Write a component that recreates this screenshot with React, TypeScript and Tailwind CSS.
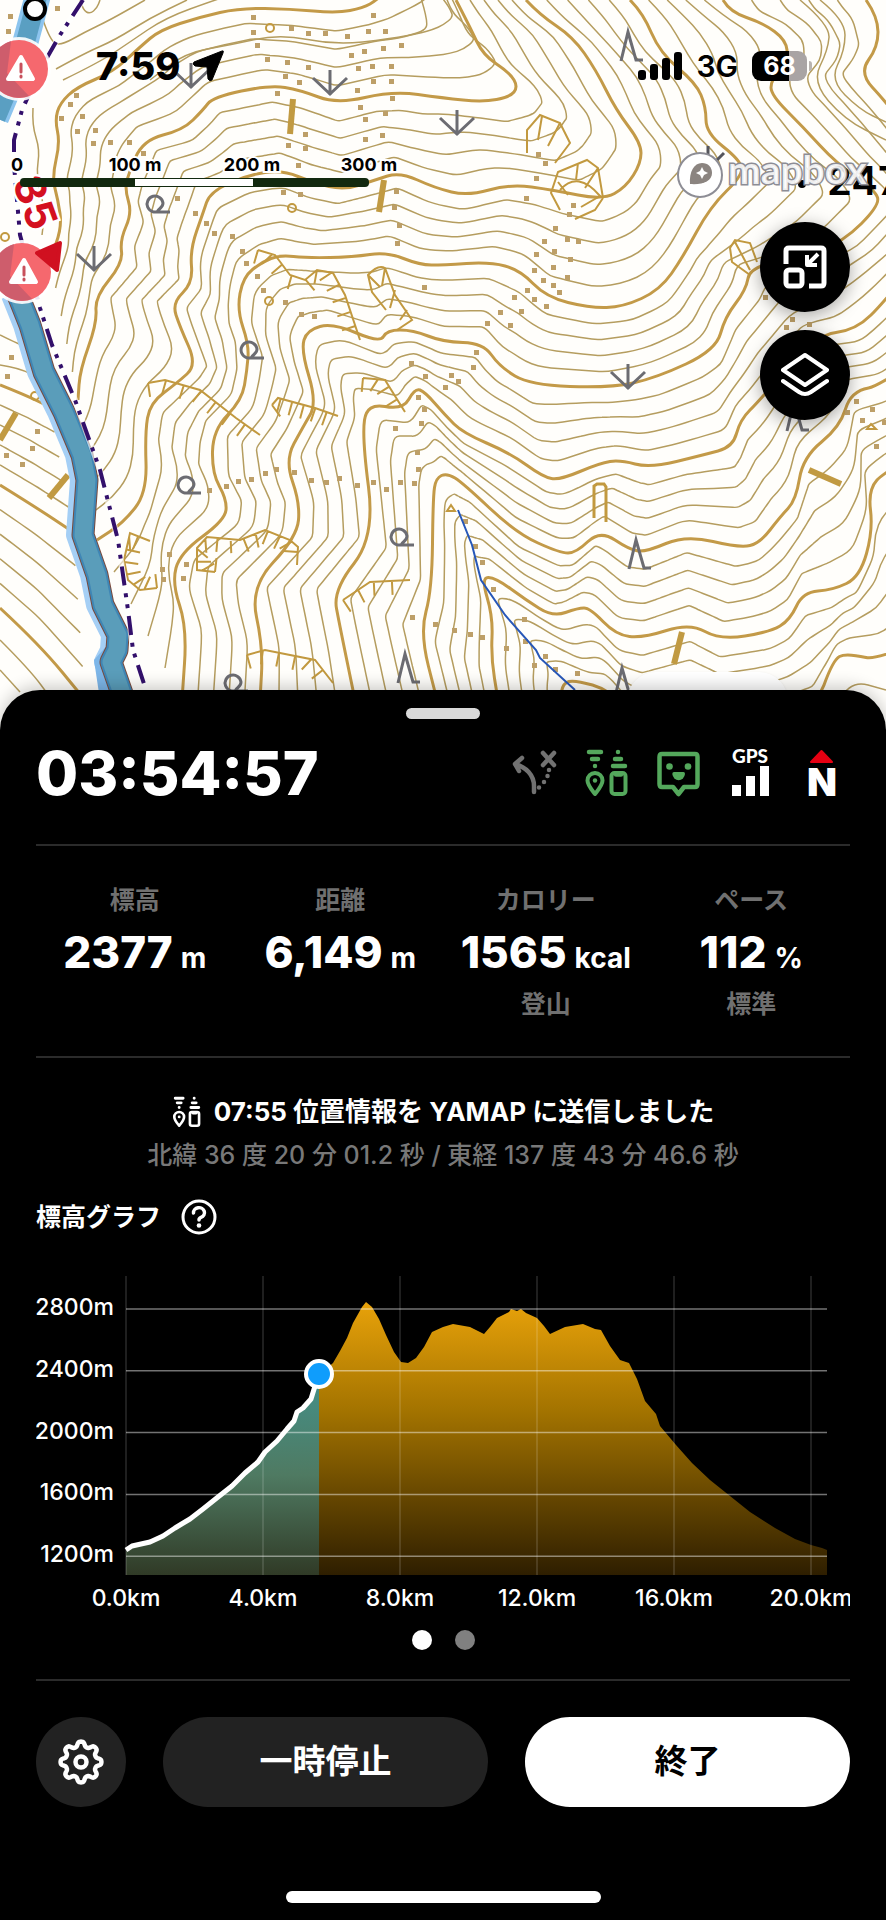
import { useState } from "react";

type Pt = [number, number];

const parse = (s: string): Pt[] =>
  s.trim().split(/\s+/).map((p) => p.split(",").map(Number) as Pt);

// Index contours, from the summit side down to the valley
const CONTOURS: Record<string, Pt[]> = {
  A: parse("400,-80 410,-30 377,0 363,8 337,13 290,9 240,8 200,17 160,30 140,47 113,72 77,87 60,103 55,120 60,143 52,177 58,200 62,227 50,260"),
  B: parse("456,0 470,27 483,55 510,73 518,87 510,97 483,102 443,98 393,91 337,104 300,90 270,85 213,97 203,110 183,130 143,140 128,175 125,190 132,213 120,240 123,263 95,297 97,323 80,370 78,400"),
  C: parse("526,0 540,15 573,37 596,70 616,110 641,143 641,163 626,187 603,200 553,190 510,184 468,196 435,188 400,172 375,180 345,190 313,183 283,170 247,175 210,192 203,213 190,250 193,283 172,303 180,327 197,365 177,383 150,403 145,433 147,493 123,523 97,540"),
  D: parse("630,0 643,13 660,53 696,83 706,107 706,133 740,160 743,175 710,207 683,257 660,290 623,307 590,308 546,297 520,270 490,262 443,265 420,265 387,252 353,257 307,258 280,255 262,262 243,277 237,310 249,345 247,370 242,400 213,430 212,473 227,500 225,520 180,553 172,583 187,627 182,700"),
  E: parse("723,0 730,12 763,23 786,40 788,60 771,80 771,95 803,127 836,163 875,190 880,205 843,242 800,258 750,267 746,290 725,317 716,350 656,378 610,388 530,385 500,367 483,343 443,342 413,330 387,330 380,343 333,323 307,330 301,350 317,403 303,427 285,460 300,503 297,537 250,587 263,647 260,700"),
  F: parse("866,0 878,17 878,47 859,73 886,102 940,170 950,220 886,300 856,330 816,335 760,400 740,420 733,447 703,455 650,468 620,460 600,463 560,480 543,477 510,453 463,433 445,415 425,392 415,388 403,410 367,403 362,437 375,537 333,590 340,627 355,700"),
  G: parse("1000,300 886,385 851,391 840,427 803,457 796,500 780,517 760,543 740,548 686,535 646,552 630,550 600,530 576,553 560,553 516,533 463,483 447,473 436,478 433,497 432,590 420,633 437,700"),
  H: parse("1000,400 886,470 868,490 873,530 860,577 833,590 803,592 790,620 770,632 720,640 690,623 643,638 616,635 590,608 578,608 553,617 526,600 496,578 481,577 493,617 491,657 498,700"),
  I: parse("1000,600 886,662 846,653 833,660 815,710 720,725 690,715 640,725 610,690 575,680 563,683 560,700"),
  L: parse("0,385 25,395 50,407"),
  M: parse("0,485 37,508 73,532"),
  N: parse("0,608 40,645 85,700"),
};

// Neighbouring contours and the vertices where they follow the same ridge or valley
const BANDS: { from: string; to: string; ties: Pt[] }[] = [
  { from: "A", to: "B", ties: [[0, 0], [1, 4], [4, 9], [6, 11], [10, 15], [15, 17], [18, 24]] },
  { from: "B", to: "C", ties: [[0, 0], [4, 6], [6, 8], [8, 12], [9, 15], [11, 17], [12, 18], [15, 19], [17, 21], [20, 22], [21, 23], [24, 31]] },
  { from: "C", to: "D", ties: [[0, 0], [6, 7], [8, 12], [10, 15], [13, 18], [15, 20], [18, 22], [22, 24], [25, 26], [26, 28], [28, 29], [31, 35]] },
  { from: "D", to: "E", ties: [[0, 0], [7, 10], [9, 13], [12, 18], [15, 21], [18, 24], [20, 26], [22, 27], [25, 29], [28, 31], [30, 32], [32, 34], [35, 36]] },
  { from: "E", to: "F", ties: [[0, 0], [5, 3], [10, 6], [14, 9], [16, 11], [18, 15], [19, 18], [21, 21], [23, 23], [27, 25], [31, 26], [33, 27], [34, 28], [36, 30]] },
  { from: "F", to: "G", ties: [[6, 0], [9, 2], [11, 6], [12, 8], [14, 10], [15, 12], [18, 14], [20, 16], [23, 17], [26, 19], [27, 20], [28, 21], [30, 22]] },
  { from: "G", to: "H", ties: [[0, 0], [2, 2], [4, 5], [5, 6], [8, 9], [9, 10], [10, 11], [12, 14], [14, 15], [16, 17], [17, 18], [20, 20], [22, 21]] },
  { from: "H", to: "I", ties: [[0, 0], [4, 2], [6, 4], [9, 5], [10, 6], [11, 7], [14, 8], [18, 10], [21, 11]] },
  { from: "L", to: "M", ties: [[0, 0], [2, 2]] },
  { from: "M", to: "N", ties: [[0, 0], [2, 2]] },
];

const resample = (pts: Pt[], n: number): Pt[] => {
  const len = [0];
  for (let i = 1; i < pts.length; i++) {
    len.push(len[i - 1] + Math.hypot(pts[i][0] - pts[i - 1][0], pts[i][1] - pts[i - 1][1]));
  }
  const total = len[len.length - 1];
  const out: Pt[] = [];
  for (let k = 0; k <= n; k++) {
    const d = (total * k) / n;
    let i = 1;
    while (i < pts.length - 1 && len[i] < d) i++;
    const t = (d - len[i - 1]) / (len[i] - len[i - 1]);
    out.push([
      pts[i - 1][0] + (pts[i][0] - pts[i - 1][0]) * t,
      pts[i - 1][1] + (pts[i][1] - pts[i - 1][1]) * t,
    ]);
  }
  return out;
};

const smooth = (pts: Pt[]) => {
  let d = `M${pts[0][0]} ${pts[0][1]}`;
  for (let i = 1; i < pts.length - 1; i++) {
    const mx = (pts[i][0] + pts[i + 1][0]) / 2;
    const my = (pts[i][1] + pts[i + 1][1]) / 2;
    d += `Q${pts[i][0]} ${pts[i][1]} ${mx.toFixed(1)} ${my.toFixed(1)}`;
  }
  const last = pts[pts.length - 1];
  return `${d}L${last[0]} ${last[1]}`;
};

const between = (band: (typeof BANDS)[number], t: number) => {
  const a = CONTOURS[band.from];
  const b = CONTOURS[band.to];
  const pts: Pt[] = [];
  for (let i = 1; i < band.ties.length; i++) {
    const [a0, b0] = band.ties[i - 1];
    const [a1, b1] = band.ties[i];
    const ra = resample(a.slice(a0, a1 + 1), 10);
    const rb = resample(b.slice(b0, b1 + 1), 10);
    ra.forEach((p, k) => {
      if (k === 0 && i > 1) return;
      pts.push([p[0] + (rb[k][0] - p[0]) * t, p[1] + (rb[k][1] - p[1]) * t]);
    });
  }
  return smooth(pts);
};

const MINOR = BANDS.flatMap((band) => [0.2, 0.4, 0.6, 0.8].map((t) => between(band, t)));

const EXTRA = [
  "43,20 50,40 60,46 85,32 110,20 145,0",
  "56,69 85,53 115,40 150,18 187,0",
  "63,80 100,62 130,42 165,18 215,0 240,-8",
  "80,0 83,10 90,14 97,8 100,0",
  "33,108 32,125 40,150 36,175 45,210 42,235",
  "420,-5 428,20 425,32 390,39 335,45 280,34 230,45 185,53 150,80",
  "820,0 845,20 845,50 830,80 860,110 886,122",
  "800,0 830,25 828,50 812,82 845,120 886,140",
  "0,335 20,345 35,350",
  "0,365 20,368 42,380",
  "0,640 30,670 52,700",
  "0,670 20,692",
  "840,700 850,680 886,690",
].map((s) => smooth(parse(s)));

const CLIFFS = [
  "258,250 275,255 290,275 305,280 317,270 333,273 345,295 360,340",
  "148,383 165,380 200,390 236,418 260,435",
  "272,405 278,398 315,408 338,416",
  "363,378 385,380 405,412",
  "157,588 140,590 128,580 124,560 130,533 150,541",
  "215,572 197,570 197,548 207,537 240,540 265,530 290,540 298,547 297,565",
  "247,655 265,650 315,660 333,683",
  "343,600 370,582 410,580",
].map(parse);

const DOTS = parse(
  "10,16 8,31 57,8 253,17 253,32 291,28 308,33 325,33 347,36 368,31 385,31 373,15 257,45 267,59 287,62 308,67 285,76 299,82 277,93 351,55 364,51 383,48 401,45 358,68 372,66 391,66 357,90 373,81 391,81 392,98 360,107 365,119 385,113 305,134 365,139 382,135 305,148 288,145 298,165 76,95 70,104 61,118 82,116 77,131 95,130 93,143 110,142 129,142 143,153 177,198 195,213 206,223 214,233 232,236 242,251 246,263 257,276 263,290 285,302 301,314 314,316 424,287 396,191 394,207 399,225 397,243 283,192 300,194 " +
  "538,154 545,163 536,178 526,198 573,205 569,214 555,228 544,241 567,239 578,241 536,254 554,251 570,259 534,270 553,267 543,280 567,277 527,290 553,285 559,292 514,297 534,299 546,306 500,312 521,311 487,323 510,325 792,319 786,327 809,324 765,297 " +
  "11,357 7,376 37,431 32,448 6,455 22,464 209,490 226,486 238,481 251,479 265,473 276,469 294,472 311,480 326,482 339,478 357,485 373,482 386,489 400,482 414,483 418,469 417,452 395,428 421,423 424,409 418,397 425,376 411,363 169,554 186,564 162,569 163,579 183,578 412,617 435,624 " +
  "476,352 473,367 451,375 458,381 445,387 465,521 475,546 482,562 493,589 524,619 470,634 482,637 506,648 525,641 545,656 534,665 555,669 577,673 454,630 856,401 872,409 862,420 884,422 847,412 876,446"
);

const BARS = [
  [293, 99, 290, 134],
  [384, 180, 379, 212],
  [16, 413, 0, 440],
  [68, 475, 49, 498],
  [682, 632, 674, 664],
  [809, 470, 841, 484],
];

const RIVER = "M18 295 L30 325 L44 372 L64 412 L82 455 L87 480 L83 535 L97 575 L103 605 L118 635 L117 650 L111 662 L126 705";
const RIVER_TOP = "M38 -5 L26 40 L12 80 L-4 118";
const BORDER = "M83 0 L60 35 L40 70 L22 110 L14 140 L14 165 L20 235 L40 308 L52 345 L75 400 L100 470 L118 540 L128 610 L133 650 L146 690";

const ticks = (pts: Pt[]) =>
  resample(pts, Math.max(3, Math.round(pts.length * 1.4)))
    .slice(0, -1)
    .map((p, i, all) => {
      const q = all[i + 1] ?? pts[pts.length - 1];
      const l = Math.hypot(q[0] - p[0], q[1] - p[1]) || 1;
      return `M${p[0]} ${p[1]}l${(-(q[1] - p[1]) / l) * 14} ${((q[0] - p[0]) / l) * 14}`;
    })
    .join("");

const Warning = ({ x, y }: { x: number; y: number }) => (
  <g transform={`translate(${x} ${y})`}>
    <circle r="32" fill="#fff" opacity="0.9" />
    <circle r="29" fill="#f5686e" />
    <path d="M-29 0A29 29 0 0 0 10 27L-12 4L-8 -28A29 29 0 0 0 -29 0Z" fill="#c05a6c" opacity="0.75" />
    <path d="M2 -12L14 10H-11Z" fill="#fff" stroke="#fff" strokeWidth="4" strokeLinejoin="round" />
    <path d="M2 -5V3M2 7V8" stroke="#c8505c" strokeWidth="3" strokeLinecap="round" />
  </g>
);

const TopoMap = () => (
  <svg
    className="absolute inset-0 h-full w-full"
    viewBox="0 0 886 730"
    preserveAspectRatio="xMidYMin slice"
    role="img"
    aria-label="地図"
  >
    <rect width="886" height="730" fill="#fffefb" />
    <g fill="none" stroke="#b59d5f" strokeWidth="1.5">
      {[...MINOR, ...EXTRA].map((d, i) => (
        <path key={i} d={d} />
      ))}
    </g>
    <g fill="none" stroke="#c39a48" strokeWidth="3" strokeLinejoin="round">
      {Object.entries(CONTOURS).map(([id, pts]) => (
        <path key={id} d={smooth(pts)} />
      ))}
    </g>

    {/* Cliffs */}
    <g fill="none" stroke="#c2993f" strokeWidth="2">
      {CLIFFS.map((pts, i) => (
        <path key={i} d={`M${pts.join("L")}${ticks(pts)}`} />
      ))}
      <path d="M397 330L412 320L395 295L385 268Q378 264 368 275L372 292L386 310M385 268L382 286M395 290L390 308M368 275L380 287M407 310L400 320" />
      <path d="M527 153V130L540 115L560 123L570 143L555 163M542 116L538 140M560 123L548 146" />
      <path d="M560 210L551 193L558 172L587 160L598 168L603 198M603 198L595 210L575 219M578 163L576 180M598 168L585 188M558 182L568 195M560 190Q578 170 600 196L581 207" />
      <path d="M750 275L732 262L730 248L735 240L750 243L757 262M735 242L750 270" />
      <path d="M594 518V486L597 484H604L606 487V522" strokeWidth="3" />
      <circle cx="270" cy="28" r="4" />
      <circle cx="292" cy="208" r="4" />
      <circle cx="269" cy="301" r="4" />
      <circle cx="5" cy="237" r="4" />
      <circle cx="35" cy="396" r="4" />
      <path d="M451 505l4 6h-8z M871 424l5 5h-9z" />
    </g>
    <g stroke="#c19a42" strokeWidth="6">
      {BARS.map(([x1, y1, x2, y2]) => (
        <line key={x1} x1={x1} y1={y1} x2={x2} y2={y2} />
      ))}
    </g>
    <g fill="#bd9f68">
      {DOTS.map(([x, y]) => (
        <rect key={`${x}-${y}`} x={x - 2} y={y - 2} width="5" height="5" />
      ))}
    </g>
    <path d="M458 510L472 545L481 580L505 615L536 650L540 658L575 690" fill="none" stroke="#2757b8" strokeWidth="2" />

    {/* Vegetation */}
    <g fill="none" stroke="#6c6c72" strokeWidth="3">
      {parse("191,88 330,95 94,271 457,135 628,389").map(([x, y]) => (
        <path key={x} d={`M${x} ${y - 25}V${y}M${x - 17} ${y - 17}L${x} ${y - 1}L${x + 17} ${y - 17}`} />
      ))}
      {parse("628,32 636,540 405,654 622,668 794,402").map(([x, y]) => (
        <path key={x} d={`M${x - 7} ${y + 29}L${x} ${y}L${x + 8} ${y + 28}H${x + 15}`} />
      ))}
      {parse("155,203 249,349 186,484 399,536 233,682").map(([x, y]) => (
        <path key={x} d={`M${x + 4} ${y + 8}A8 8 0 1 1 ${x + 8} ${y}C${x + 8} ${y + 5} ${x + 4} ${y + 5} ${x + 2} ${y + 9}H${x + 15}`} />
      ))}
    </g>

    {/* River */}
    <g fill="none" strokeLinejoin="round">
      <path d={RIVER_TOP} stroke="#8cc4ee" strokeWidth="26" />
      <path d={RIVER_TOP} stroke="#5a9fc2" strokeWidth="19" />
      <path d={RIVER} stroke="#a5cff5" strokeWidth="20" transform="translate(-7 0)" />
      <path d="M94 660L112 640L125 690L100 700Z" fill="#7db6e8" />
      <path d={RIVER} stroke="#7a4a3c" strokeWidth="23" />
      <path d={RIVER} stroke="#3f86b5" strokeWidth="21" />
      <path d={RIVER} stroke="#5a9dba" strokeWidth="17" />
      <path d={BORDER} stroke="#fff" strokeWidth="6" opacity="0.6" />
      <path d={BORDER} stroke="#33106b" strokeWidth="4" strokeDasharray="19 8 4 7 4 8" />
    </g>
    <circle cx="35" cy="9" r="10" fill="#fff" stroke="#000" strokeWidth="4" />
    <Warning x={19} y={69} />
    <Warning x={22} y={272} />
    <path d="M37 253L60 243L57 270Z" fill="#d01020" stroke="#d01020" strokeWidth="4" strokeLinejoin="round" />
    <text
      transform="translate(12 182) rotate(70)"
      className="font-['Inter',sans-serif] text-[42px] font-bold"
      fill="#d4101f"
      stroke="#fff"
      strokeWidth="5"
      paintOrder="stroke"
    >
      35
    </text>

    {/* Spot height */}
    <circle cx="802" cy="184" r="4" />
    <text x="827" y="195" className="font-['Inter',sans-serif] text-[40px] font-semibold">
      247
    </text>

    {/* Map credit */}
    <path d="M708 146V155M724 153L717 160" stroke="#55555c" strokeWidth="3" />
    <circle cx="700" cy="175" r="22" fill="#fff" stroke="#8d8d95" strokeWidth="2" />
    <path d="M690 184C689 172 694 163 702 163C708 163 712 167 712 173C712 181 703 185 690 184Z" fill="#8b8480" />
    <path d="M702 167L704 171L708 173L704 175L702 179L700 175L696 173L700 171Z" fill="#fff" />
    <text
      x="728"
      y="184"
      className="font-['Lato',sans-serif] text-[39px] font-bold"
      fill="#fff"
      stroke="#8d8d95"
      strokeWidth="3"
      paintOrder="stroke"
      fillOpacity="0.85"
    >
      mapbox
    </text>

    {/* Scale */}
    <rect x="20" y="178" width="349" height="9" rx="4" fill="#12290f" />
    <rect x="135" y="179" width="118" height="7" fill="#fff" />
    <g
      className="font-['Inter',sans-serif] text-[18px] font-bold"
      textAnchor="middle"
      stroke="#fff"
      strokeWidth="4"
      paintOrder="stroke"
    >
      <text x="17" y="171">0</text>
      <text x="135" y="171">100 m</text>
      <text x="252" y="171">200 m</text>
      <text x="369" y="171">300 m</text>
    </g>
  </svg>
);

const StatusBar = () => (
  <div className="relative flex h-[132px] items-center justify-between pr-[74px] pl-24 text-black">
    <div className="flex items-center gap-3">
      <span className="text-[38px] leading-none font-extrabold">7:59</span>
      <svg className="h-8 w-8" viewBox="0 0 32 32" aria-hidden="true">
        <path d="M30 1Q32 0 31 3L20 30Q18 32 16 29L15 17L3 16Q0 14 2 12Z" stroke="#000" />
      </svg>
    </div>
    <div className="flex items-center gap-[14px]">
      <svg className="h-7 w-11" viewBox="0 0 44 28" aria-hidden="true">
        <rect x="0" y="18" width="8" height="10" rx="3" />
        <rect x="12" y="12" width="8" height="16" rx="3" />
        <rect x="24" y="6" width="8" height="22" rx="3" />
        <rect x="36" y="0" width="8" height="28" rx="3" />
      </svg>
      <span className="text-[30px] leading-none font-semibold">3G</span>
      <div className="flex items-center gap-[2px]">
        <span className="flex h-[30px] w-[55px] items-center justify-center rounded-[9px] bg-linear-to-r from-black from-68% to-[#a9a4a4] to-68% text-[25px] leading-none font-bold text-white">
          68
        </span>
        <span className="h-[10px] w-[3px] rounded-r bg-[#b9b4b0]" />
      </div>
    </div>
  </div>
);

const TurnIcon = () => (
  <svg className="h-12 w-[46px]" viewBox="0 0 46 48" fill="none" stroke="#727272" strokeWidth="4.500" strokeLinecap="round" strokeLinejoin="round">
    <path d="M22 43V37C22 26 14 18 3 15M10 9L3 15L7 22M31 4L42 16M42 4L31 16" />
    <path d="M37 21h0M35.500 27h0M32 33h0M27 38.500h0" />
  </svg>
);

const BeaconIcon = ({ className }: { className: string }) => (
  <svg className={className} viewBox="0 0 46 48" fill="none" stroke="currentColor" strokeWidth="4.500" strokeLinecap="round" strokeLinejoin="round">
    <path d="M5 3H17M8 10H14M11 17h0M34 3h0M31 10H37M29 17H41" />
    <path d="M11 45C7 40 3.500 36 3.500 31.500A7.500 7.500 0 0 1 18.500 31.500C18.500 36 15 40 11 45Z" strokeWidth="4" />
    <circle cx="11" cy="31.500" r="2.200" fill="currentColor" stroke="none" />
    <rect x="27.500" y="24" width="14" height="21" rx="3" strokeWidth="4" />
    <path d="M32 25.500H37" />
  </svg>
);

const FaceIcon = () => (
  <svg className="h-12 w-[46px]" viewBox="0 0 46 48" fill="none" stroke="#54a85c" strokeWidth="4.500" strokeLinejoin="round">
    <path d="M6 5H39Q41.500 5 41.500 8V35Q41.500 38 39 38H28L22.500 45L17 38H6Q3.500 38 3.500 35V8Q3.500 5 6 5Z" />
    <g fill="#54a85c" stroke="none">
      <circle cx="13.500" cy="17.500" r="3.300" />
      <circle cx="32" cy="17.500" r="3.300" />
      <path d="M18 23H27.500Q29 23 29 25A6.400 7 0 0 1 16.300 25Q16.300 23 18 23Z" />
    </g>
  </svg>
);

const GpsIcon = () => (
  <svg className="h-12 w-[46px] overflow-visible" viewBox="0 0 46 48" fill="#fff">
    <text x="22" y="14" textAnchor="middle" className="font-['Lato',sans-serif] text-[19px] font-black">GPS</text>
    <path d="M4 36h9v11h-9zM18 27h9v20h-9zM32 17h9v30h-9z" />
  </svg>
);

const NorthIcon = () => (
  <svg className="h-12 w-[46px] overflow-visible" viewBox="0 0 46 48" fill="#fff">
    <path d="M21.500 2L32 13H11Z" fill="#e60012" stroke="#e60012" strokeWidth="2" strokeLinejoin="round" />
    <text x="22" y="47" textAnchor="middle" className="font-['Inter',sans-serif] text-[39px] font-black">N</text>
  </svg>
);

const gearPath = () => {
  const pts: string[] = [];
  for (let i = 0; i < 160; i++) {
    const a = (i / 160) * Math.PI * 2;
    const r = 18 + 2.6 * Math.tanh(1.6 * Math.cos(8 * a));
    pts.push(`${(24 + r * Math.cos(a)).toFixed(2)} ${(24 + r * Math.sin(a)).toFixed(2)}`);
  }
  return `M${pts.join("L")}Z`;
};

const GearIcon = () => (
  <svg className="h-12 w-12" viewBox="0 0 48 48" fill="none" stroke="#fff" strokeWidth="4.500" strokeLinejoin="round">
    <path d={gearPath()} />
    <circle cx="24" cy="24" r="5.500" />
  </svg>
);

const stats = [
  { label: "標高", value: "2377", unit: "m" },
  { label: "距離", value: "6,149", unit: "m" },
  { label: "カロリー", value: "1565", unit: "kcal", note: "登山" },
  { label: "ペース", value: "112", unit: "%", note: "標準" },
];

const WALKED =
  "90,285 96,281 114,277 127,271 139,263 154,254 167,244 182,232 196,221 209,208 222,197 229,187 241,176 251,164 258,156 261,147 267,143 275,134 279,121 283,110";
const AHEAD =
  "283,110 297,98 304,86 311,73 317,58 326,42 330,37 336,42 343,54 350,70 358,87 365,97 372,98 380,93 388,82 396,67 407,62 417,59 434,62 448,69 454,62 461,53 473,47 475,44 481,46 485,44 490,48 501,53 508,61 514,69 529,62 547,59 559,64 565,65 574,81 584,95 593,98 601,114 609,136 620,149 624,161 640,180 656,198 674,215 694,231 714,247 739,263 759,274 775,280 786,283 791,285";

const ElevationChart = () => (
  <svg className="mt-7 block w-full" viewBox="0 0 814 350" role="img" aria-label="標高グラフ">
    <defs>
      <linearGradient id="ahead" gradientUnits="userSpaceOnUse" x1="0" y1="37" x2="0" y2="310">
        <stop offset="0" stopColor="#e8a20a" />
        <stop offset="0.400" stopColor="#a37300" />
        <stop offset="1" stopColor="#2e1e00" />
      </linearGradient>
      <linearGradient id="walked" gradientUnits="userSpaceOnUse" x1="0" y1="110" x2="0" y2="310">
        <stop offset="0" stopColor="#43918a" />
        <stop offset="0.500" stopColor="#4f7a62" />
        <stop offset="1" stopColor="#303a26" />
      </linearGradient>
    </defs>
    <polygon points={`${WALKED} 283,310 90,310`} fill="url(#walked)" />
    <polygon points={`${AHEAD} 791,310 283,310`} fill="url(#ahead)" />
    {[90, 227, 364, 501, 638, 775].map((x, i) => (
      <g key={x}>
        <line x1={x} x2={x} y1="11" y2="310" stroke="#fff" strokeOpacity="0.12" strokeWidth="2" />
        <text x={x} y="341" textAnchor="middle" fill="#fff" className="text-[23px] font-medium">
          {(i * 4).toFixed(1)}km
        </text>
      </g>
    ))}
    {[2800, 2400, 2000, 1600, 1200].map((m, i) => (
      <g key={m}>
        <line x1="90" x2="791" y1={44 + i * 61.8} y2={44 + i * 61.8} stroke="#fff" strokeOpacity="0.45" strokeWidth="1.500" />
        <text x="78" y={50 + i * 61.8} textAnchor="end" fill="#fff" className="text-[23px] font-medium">
          {m}m
        </text>
      </g>
    ))}
    <polyline points={WALKED} fill="none" stroke="#fff" strokeWidth="5" strokeLinejoin="round" />
    <circle cx="283" cy="109" r="13" fill="#0f9dfc" stroke="#fff" strokeWidth="4" />
  </svg>
);

const App = () => {
  const [page, setPage] = useState(0);

  return (
    <div className="min-h-screen bg-black font-['Inter','Noto_Sans_CJK_JP',sans-serif] text-white">
      <section className="relative h-[730px] overflow-hidden">
        <TopoMap />
        <StatusBar />
        <div className="relative flex flex-col items-end gap-[18px] px-9 pt-[90px]">
          <button aria-label="地図を縮小" className="flex h-[90px] w-[90px] items-center justify-center rounded-full bg-black shadow-[0_4px_18px_rgba(0,0,0,0.35)]">
            <svg className="h-11 w-11" viewBox="0 0 44 44" fill="none" stroke="#fff" strokeWidth="5" strokeLinejoin="round">
              <path d="M3 19V6Q3 3 6 3H38Q41 3 41 6V38Q41 41 38 41H26" />
              <rect x="3" y="25" width="16" height="16" rx="3" />
              <path d="M35 9L26 18M24 10V20H34" strokeWidth="4" />
            </svg>
          </button>
          <button aria-label="レイヤー" className="flex h-[90px] w-[90px] items-center justify-center rounded-full bg-black shadow-[0_4px_18px_rgba(0,0,0,0.35)]">
            <svg className="h-12 w-12" viewBox="0 0 48 48" fill="none" stroke="#fff" strokeWidth="4" strokeLinecap="round" strokeLinejoin="round">
              <path d="M24 4L46 19L24 34L2 19Z" />
              <path d="M2 30L18 41Q24 45 30 41L46 30" />
            </svg>
          </button>
        </div>
        <div className="absolute right-[98px] bottom-0 h-[58px] w-[161px] rounded-[29px] bg-white shadow" />
      </section>

      <main className="relative -mt-10 rounded-t-[40px] bg-black px-9 pt-[18px] shadow-[0_-4px_16px_rgba(0,0,0,0.2)]">
        <div className="mx-auto h-[11px] w-[74px] rounded-full bg-[#d9d9d9]" />

        <div className="mt-[22px] flex items-center justify-between pr-1">
          <h1 className="text-[61px] leading-[64px] font-extrabold">03:54:57</h1>
          <div className="flex gap-[26px]">
            <TurnIcon />
            <BeaconIcon className="h-12 w-[46px] text-[#54a85c]" />
            <FaceIcon />
            <GpsIcon />
            <NorthIcon />
          </div>
        </div>

        <div className="mt-[39px] border-y-2 border-[#2b2b2b] pt-9 pb-[34px]">
          <dl className="-mx-1 grid grid-cols-4 text-center">
            {stats.map((s) => (
              <div key={s.label}>
                <dt className="text-[25px] leading-9 font-bold text-[#707070]">{s.label}</dt>
                <dd className="mt-[10px] flex h-12 items-baseline justify-center gap-2 leading-[48px]">
                  <span className="text-[44px] font-extrabold">{s.value}</span>
                  <span className="text-[28px] font-bold">{s.unit}</span>
                </dd>
                {s.note && <dd className="mt-[10px] text-[25px] leading-9 font-bold text-[#707070]">{s.note}</dd>}
              </div>
            ))}
          </dl>
        </div>

        <div className="mt-9 flex items-center justify-center gap-3">
          <BeaconIcon className="h-8 w-[30px]" />
          <p className="text-[26px] leading-9 font-bold">07:55 位置情報を YAMAP に送信しました</p>
        </div>
        <p className="mt-[7px] text-center text-[25px] leading-9 font-medium text-[#787878]">
          北緯 36 度 20 分 01.2 秒 / 東経 137 度 43 分 46.6 秒
        </p>

        <div className="mt-6 flex h-10 items-center gap-5">
          <h2 className="text-[25px] leading-9 font-bold">標高グラフ</h2>
          <button aria-label="ヘルプ">
            <svg className="h-9 w-9" viewBox="0 0 36 36" fill="none" stroke="#fff" strokeWidth="3" strokeLinecap="round">
              <circle cx="18" cy="18" r="16" />
              <path d="M12.500 14A5.500 5 0 1 1 20 18.300Q18 19 18 21" strokeWidth="3.500" />
              <circle cx="18" cy="26.500" r="2.300" fill="#fff" stroke="none" />
            </svg>
          </button>
        </div>

        <ElevationChart />

        <div className="mt-[15px] flex justify-center gap-[23px]">
          {[0, 1].map((i) => (
            <button
              key={i}
              aria-label={`${i + 1}ページ`}
              onClick={() => setPage(i)}
              className={`h-5 w-5 rounded-full ${page === i ? "bg-white" : "bg-[#808080]"}`}
            />
          ))}
        </div>

        <div className="mt-[29px] flex gap-[37px] border-t-2 border-[#2b2b2b] pt-9">
          <button aria-label="設定" className="flex h-[90px] w-[90px] shrink-0 items-center justify-center rounded-full bg-[#222]">
            <GearIcon />
          </button>
          <button className="h-[90px] flex-1 rounded-full bg-[#222] text-[33px] font-bold">一時停止</button>
          <button className="h-[90px] flex-1 rounded-full bg-white text-[33px] font-bold text-black">終了</button>
        </div>

        <div className="pt-[84px] pb-[18px]">
          <div className="mx-auto h-3 w-[315px] rounded-full bg-white" />
        </div>
      </main>
    </div>
  );
};

export default App;
